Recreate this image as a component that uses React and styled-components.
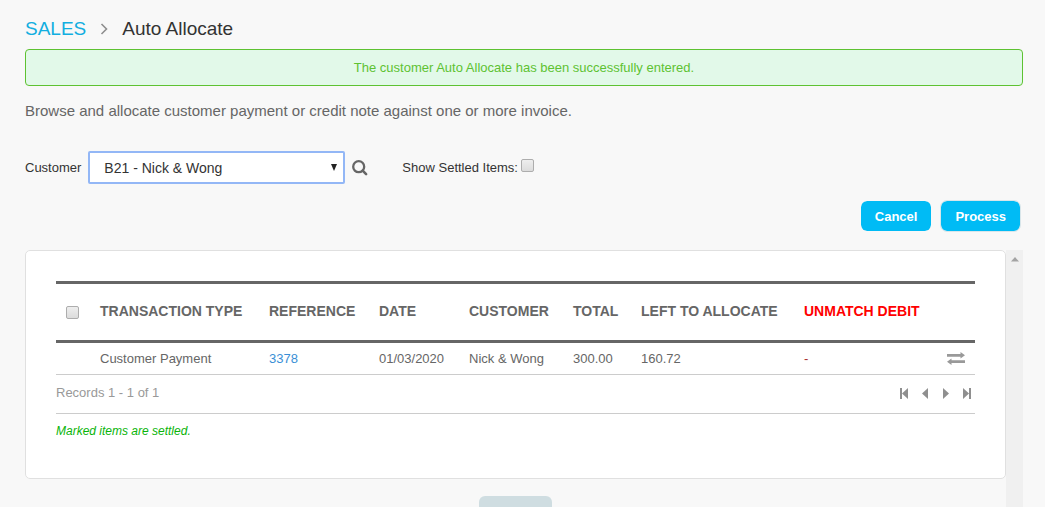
import React, { useState } from "react";
import styled, { createGlobalStyle } from "styled-components";

const customers = ["B21 - Nick & Wong"];

const payments = [
  {
    id: 3378,
    type: "Customer Payment",
    date: "01/03/2020",
    customer: "Nick & Wong",
    total: "300.00",
    left: "160.72",
    unmatched: "-",
  },
];

const App = () => {
  const [customer, setCustomer] = useState(customers[0]);
  const [showSettled, setShowSettled] = useState(false);
  const [selected, setSelected] = useState([]);

  const allSelected = selected.length === payments.length;

  return (
    <>
      <GlobalStyle />
      <StPage>
        <StTitle>
          <a href='#sales'>SALES</a>
          <svg width='8' height='12' viewBox='0 0 8 12' aria-hidden='true'>
            <path
              d='M1.5 1l5 5-5 5'
              fill='none'
              stroke='#8e8e8e'
              strokeWidth='1.6'
            />
          </svg>
          <span>Auto Allocate</span>
        </StTitle>

        <StAlert role='status'>
          The customer Auto Allocate has been successfully entered.
        </StAlert>

        <StIntro>
          Browse and allocate customer payment or credit note against one or
          more invoice.
        </StIntro>

        <StFilter>
          <label htmlFor='customer'>Customer</label>
          <StSelectBox>
            <select
              id='customer'
              value={customer}
              onChange={(e) => setCustomer(e.target.value)}
            >
              {customers.map((name) => (
                <option key={name}>{name}</option>
              ))}
            </select>
            <svg width='6' height='7' viewBox='0 0 6 7' aria-hidden='true'>
              <path d='M0 0h6L3 7z' fill='#222' />
            </svg>
          </StSelectBox>
          <StIconBtn type='button' aria-label='Search customer'>
            <svg width='16' height='16' viewBox='0 0 16 16' aria-hidden='true'>
              <circle
                cx='6.7'
                cy='6.7'
                r='5.5'
                fill='none'
                stroke='#666'
                strokeWidth='2.3'
              />
              <path
                d='M10.7 10.7l3.4 3.4'
                stroke='#666'
                strokeWidth='2.6'
                strokeLinecap='round'
              />
            </svg>
          </StIconBtn>
          <StSettled>
            <label htmlFor='settled'>Show Settled Items:</label>
            <StCheck
              id='settled'
              type='checkbox'
              checked={showSettled}
              onChange={(e) => setShowSettled(e.target.checked)}
            />
          </StSettled>
        </StFilter>

        <StActions>
          <StBtn type='button'>Cancel</StBtn>
          <StBtn type='button' $outlined>
            Process
          </StBtn>
        </StActions>

        <StScroll>
          <StContent>
            <StCard>
              <StTable>
                <colgroup>
                  <StCol $w={44} />
                  <StCol $w={169} />
                  <StCol $w={110} />
                  <StCol $w={90} />
                  <StCol $w={104} />
                  <StCol $w={68} />
                  <StCol $w={163} />
                  <StCol $w={124} />
                  <col />
                </colgroup>
                <thead>
                  <tr>
                    <th className='check'>
                      <StCheck
                        type='checkbox'
                        aria-label='Select all'
                        checked={allSelected}
                        onChange={() =>
                          setSelected(
                            allSelected ? [] : payments.map((p) => p.id)
                          )
                        }
                      />
                    </th>
                    <th>TRANSACTION TYPE</th>
                    <th>REFERENCE</th>
                    <th>DATE</th>
                    <th>CUSTOMER</th>
                    <th>TOTAL</th>
                    <th>LEFT TO ALLOCATE</th>
                    <th className='debit'>UNMATCH DEBIT</th>
                    <th></th>
                  </tr>
                </thead>
                <tbody>
                  {payments.map((p) => (
                    <tr key={p.id}>
                      <td></td>
                      <td>{p.type}</td>
                      <td>
                        <a href={`#${p.id}`}>{p.id}</a>
                      </td>
                      <td>{p.date}</td>
                      <td>{p.customer}</td>
                      <td>{p.total}</td>
                      <td>{p.left}</td>
                      <td className='unmatched'>{p.unmatched}</td>
                      <td className='allocate'>
                        <StIconBtn type='button' aria-label='Allocate'>
                          <svg
                            width='18'
                            height='13'
                            viewBox='0 0 18 13'
                            aria-hidden='true'
                          >
                            <path
                              d='M0 2h13.5V0L18 3.3l-4.5 3.3V4.8H0zM18 8.2H4.5V6.4L0 9.7 4.5 13v-2H18z'
                              fill='#999'
                            />
                          </svg>
                        </StIconBtn>
                      </td>
                    </tr>
                  ))}
                </tbody>
              </StTable>
              <StPager>
                <span>Records 1 - 1 of 1</span>
                <div>
                  <StIconBtn type='button' aria-label='First page'>
                    <PagerIcon d='M0 0h2v11H0zM8 0v11L2 5.5z' />
                  </StIconBtn>
                  <StIconBtn type='button' aria-label='Previous page'>
                    <PagerIcon d='M7 0v11L1 5.5z' />
                  </StIconBtn>
                  <StIconBtn type='button' aria-label='Next page'>
                    <PagerIcon d='M1 0v11l6-5.5z' />
                  </StIconBtn>
                  <StIconBtn type='button' aria-label='Last page'>
                    <PagerIcon d='M0 0v11l6-5.5zM6 0h2v11H6z' />
                  </StIconBtn>
                </div>
              </StPager>
              <StNote>Marked items are settled.</StNote>
            </StCard>
            <StFadedBtn type='button' disabled />
          </StContent>
          <StTrack>
            <svg width='8' height='5' viewBox='0 0 8 5' aria-hidden='true'>
              <path d='M4 0l4 4.5H0z' fill='#a3a3a3' />
            </svg>
          </StTrack>
        </StScroll>
      </StPage>
    </>
  );
};

const PagerIcon = ({ d }) => (
  <svg width='8' height='11' viewBox='0 0 8 11' aria-hidden='true'>
    <path d={d} fill='#8f8f8f' />
  </svg>
);

const GlobalStyle = createGlobalStyle`
  * {
    box-sizing: border-box;
  }
  body {
    margin: 0;
    background-color: #f8f8f8;
    color: #333;
    font-family: "Liberation Sans", Arial, sans-serif;
    font-size: 13px;
  }
  a {
    text-decoration: none;
  }
`;

const StPage = styled.div`
  display: flex;
  flex-direction: column;
  height: 100vh;
  padding: 16px 22px 0 25px;
  overflow: hidden;
`;

const StTitle = styled.h1`
  display: flex;
  align-items: center;
  gap: 14px;
  margin: 0 0 8px;
  font-size: 19px;
  font-weight: normal;
  line-height: 25px;
  a {
    color: #12aee0;
  }
`;

const StAlert = styled.div`
  padding: 10px;
  border: 1px solid #5ec232;
  border-radius: 4px;
  background-color: #e2f9e9;
  color: #5ec232;
  line-height: 15px;
  text-align: center;
`;

const StIntro = styled.p`
  margin: 16px 0 31px;
  color: #666;
  font-size: 15px;
  line-height: 18px;
`;

const StFilter = styled.div`
  display: flex;
  align-items: center;
`;

const StSelectBox = styled.div`
  position: relative;
  width: 257px;
  margin: 0 7px;

  select {
    display: block;
    width: 100%;
    height: 33px;
    padding: 0 24px 0 14px;
    appearance: none;
    border: 2px solid #93b7f6;
    border-radius: 2px;
    outline: none;
    background-color: #fff;
    color: #333;
    font-family: inherit;
    font-size: 14px;
  }
  svg {
    position: absolute;
    top: 13px;
    right: 8px;
    pointer-events: none;
  }
`;

const StIconBtn = styled.button`
  display: inline-flex;
  padding: 0;
  border: none;
  background: none;
  cursor: pointer;
`;

const StSettled = styled.div`
  display: flex;
  align-items: center;
  gap: 3px;
  margin-left: 34px;

  input {
    margin-bottom: 4px;
  }
`;

const StCheck = styled.input`
  width: 13px;
  height: 13px;
  margin: 0;
  appearance: none;
  border: 1px solid #adadad;
  border-radius: 2px;
  background: linear-gradient(#eee, #dcdcdc);
  &:checked {
    background: #888;
  }
`;

const StActions = styled.div`
  display: flex;
  justify-content: flex-end;
  gap: 8px;
  padding: 16px 2px 18px 0;
`;

const StBtn = styled.button`
  height: 32px;
  padding: 0 14px;
  border: 1px solid ${({ $outlined }) => ($outlined ? "#d9e6ea" : "#f8f8f8")};
  border-radius: 7px;
  background-color: #00bbf5;
  background-clip: padding-box;
  color: #fff;
  font-family: inherit;
  font-size: 13px;
  font-weight: bold;
`;

const StScroll = styled.div`
  display: flex;
  flex: 1;
  min-height: 0;
`;

const StContent = styled.div`
  flex: 1;
  min-width: 0;
  overflow: hidden;
`;

const StCard = styled.div`
  padding: 30px 30px 39px;
  border: 1px solid #e0e0e0;
  border-radius: 5px;
  background-color: #fff;
`;

const StTable = styled.table`
  width: 100%;
  border-spacing: 0;
  table-layout: fixed;
  color: #666;

  th,
  td {
    padding: 0;
    text-align: left;
    white-space: nowrap;
  }
  th {
    height: 62px;
    padding-bottom: 2px;
    border-top: 3px solid #666;
    border-bottom: 3px solid #666;
    font-size: 14px;
  }
  td {
    height: 32px;
    border-bottom: 1px solid #ccc;
  }
  a {
    color: #3a8fd6;
  }
  .check {
    padding: 3px 0 0 10px;
    line-height: 1;
  }
  .debit {
    color: #f00;
  }
  .unmatched {
    color: #a33;
  }
  .allocate {
    padding: 2px 10px 0 0;
    text-align: right;
    line-height: 1;
  }
`;

const StCol = styled.col`
  width: ${({ $w }) => $w}px;
`;

const StPager = styled.div`
  display: flex;
  align-items: center;
  justify-content: space-between;
  height: 39px;
  padding-bottom: 3px;
  border-bottom: 1px solid #ccc;
  color: #999;

  div {
    display: flex;
    gap: 13px;
    padding: 2px 4px 0 0;
  }
`;

const StNote = styled.p`
  margin: 10px 0 0;
  color: #0ab40a;
  font-size: 12px;
  font-style: italic;
  line-height: 15px;
`;

const StFadedBtn = styled.button`
  display: block;
  width: 73px;
  height: 31px;
  margin: 17px auto 0;
  border: none;
  border-radius: 6px;
  background-color: #cfdde1;
`;

const StTrack = styled.div`
  display: flex;
  justify-content: center;
  width: 17px;
  padding-top: 7px;
  background-color: #f0f0f0;
`;

export default App;
